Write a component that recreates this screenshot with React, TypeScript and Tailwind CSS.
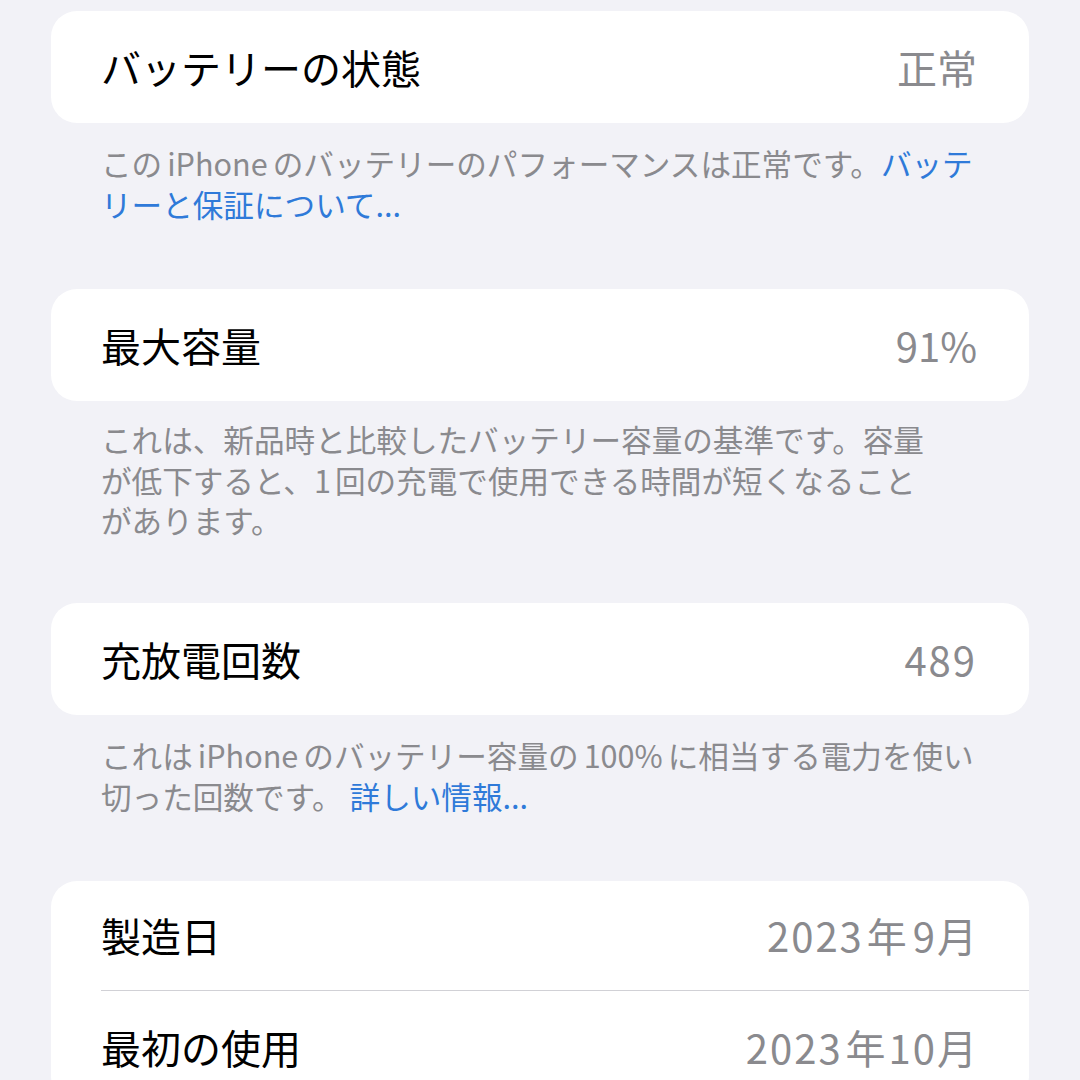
import React from "react";

const FONT = { fontFamily: '"Noto Sans CJK JP", "Noto Sans", sans-serif' };

function Row({
  label,
  value,
  h = "h-[112px]",
}: {
  label: React.ReactNode;
  value: React.ReactNode;
  h?: string;
}) {
  return (
    <div className={`flex ${h} items-center justify-between pl-[50px] pr-[52px]`}>
      <div className="text-[40px] leading-none text-black whitespace-nowrap">{label}</div>
      <div className="text-[40px] leading-none text-[#8a8a8e] whitespace-nowrap">{value}</div>
    </div>
  );
}

function Card({ children }: { children: React.ReactNode }) {
  return <div className="mx-[51px] rounded-[26px] bg-white overflow-hidden">{children}</div>;
}

function Foot({ children, cls }: { children: React.ReactNode; cls: string }) {
  return <div className={`px-[101px] text-[30.6px] text-[#8a8a8e] ${cls}`}>{children}</div>;
}

const L = ({ children }: { children: React.ReactNode }) => (
  <div className="whitespace-nowrap">{children}</div>
);
const B = ({ children }: { children: React.ReactNode }) => (
  <span className="text-[#2f7ad9]">{children}</span>
);
const Lat = ({ children }: { children: React.ReactNode }) => (
  <span className="mx-[5px]">{children}</span>
);

export default function App() {
  return (
    <div className="min-h-[1080px] w-[1080px] bg-[#f2f2f7] pt-[11px]" style={FONT}>
      <Card>
        <Row label="バッテリーの状態" value="正常" />
      </Card>
      <Foot cls="pt-[20px] pb-[64px] leading-[41px]">
        <L>
          この<Lat>iPhone</Lat>のバッテリーのパフォーマンスは正常です。<B>バッテ</B>
        </L>
        <L>
          <B>リーと保証について...</B>
        </L>
      </Foot>

      <Card>
        <Row label="最大容量" value="91%" />
      </Card>
      <Foot cls="pt-[18px] pb-[62px] leading-[40.5px]">
        <L>これは、新品時と比較したバッテリー容量の基準です。容量</L>
        <L>
          が低下すると、<span className="mr-[4px]">1</span>回の充電で使用できる時間が短くなること
        </L>
        <L>があります。</L>
      </Foot>

      <Card>
        <Row label="充放電回数" value={<span className="tracking-[2px]">489</span>} />
      </Card>
      <Foot cls="pt-[20px] pb-[64px] leading-[41px]">
        <L>
          これは<Lat>iPhone</Lat>のバッテリー容量の<Lat>100%</Lat>に相当する電力を使い
        </L>
        <L>
          切った回数です。 <B>詳しい情報...</B>
        </L>
      </Foot>

      <Card>
        <Row
          h="h-[109px]"
          label="製造日"
          value={
            <span>
              <span className="tracking-[2px]">2023</span>
              <span className="mx-[3px]">年</span>
              <span className="ml-[3px] tracking-[2px]">9</span>月
            </span>
          }
        />
        <div className="ml-[50px] h-px bg-[#d1d1d6]" />
        <Row
          h="h-[112px]"
          label="最初の使用"
          value={
            <span>
              <span className="tracking-[2px]">2023</span>
              <span className="mx-[3px]">年</span>
              <span className="tracking-[2px]">10</span>月
            </span>
          }
        />
      </Card>
      <div className="h-[60px]" />
    </div>
  );
}
